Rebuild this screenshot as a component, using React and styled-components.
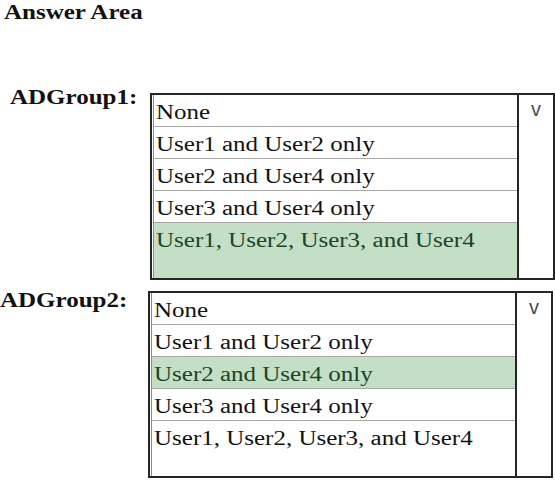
import React from 'react';
import styled, { createGlobalStyle } from 'styled-components';

const GlobalStyle = createGlobalStyle`
  html, body {
    margin: 0;
    padding: 0;
    background: #fff;
  }
  body {
    font-family: "Liberation Serif", "Times New Roman", serif;
    color: #111;
  }
`;

const Page = styled.div`
  width: 555px;
  height: 480px;
  overflow: hidden;
  display: flex;
  flex-direction: column;
`;

// the source picture is stretched sideways, so text is widened to match
const Stretch = styled.span`
  display: inline-block;
  white-space: nowrap;
  font-family: "Liberation Serif", "Times New Roman", serif;
  transform: scaleX(1.25);
  transform-origin: left center;
`;

const Title = styled.div`
  padding-left: 4px;
  height: 24px;
  line-height: 24px;
  font-size: 20px;
  font-weight: bold;
  margin-bottom: 69px;
`;

const Group = styled.div`
  display: flex;
  align-items: flex-start;
  margin-bottom: ${({ $gap }) => $gap}px;
`;

const Label = styled.div`
  box-sizing: border-box;
  width: ${({ $width }) => $width}px;
  padding-left: ${({ $indent }) => $indent}px;
  margin-top: ${({ $offset }) => $offset}px;
  font-size: 20px;
  font-weight: bold;
  line-height: 24px;
  flex-shrink: 0;
`;

const Frame = styled.div`
  box-sizing: border-box;
  width: 405px;
  height: 187px;
  border: 2px solid #262626;
  display: flex;
`;

const List = styled.div`
  flex: 1;
  display: flex;
  flex-direction: column;
  margin-left: 1px;
  border-left: 1px solid #8c8c8c;
`;

const Option = styled.div`
  box-sizing: border-box;
  height: ${({ $last }) => ($last ? 'auto' : '32px')};
  flex: ${({ $last }) => ($last ? 1 : '0 0 auto')};
  border-bottom: ${({ $last }) => ($last ? 'none' : '1px solid #a8a8a8')};
  padding: 3px 0 0 2px;
  font-size: 20px;
  line-height: 28px;
  background: ${({ $picked }) => ($picked ? '#c3dfc6' : '#fff')};
  color: ${({ $picked }) => ($picked ? '#1c4426' : '#121212')};
`;

const Arrow = styled.div`
  width: 34px;
  border-left: 2px solid #262626;
  text-align: center;
  padding-top: 3px;
  font-family: "Liberation Sans", Arial, sans-serif;
  font-size: 20px;
  line-height: 22px;
  color: #4a4a4a;
`;

const choices = [
  'None',
  'User1 and User2 only',
  'User2 and User4 only',
  'User3 and User4 only',
  'User1, User2, User3, and User4',
];

function Dropdown({ picked }) {
  return (
    <Frame>
      <List>
        {choices.map((c, i) => (
          <Option key={c} $picked={i === picked} $last={i === choices.length - 1}>
            <Stretch>{c}</Stretch>
          </Option>
        ))}
      </List>
      <Arrow>v</Arrow>
    </Frame>
  );
}

export default function App() {
  return (
    <Page>
      <GlobalStyle />
      <Title>
        <Stretch>Answer Area</Stretch>
      </Title>
      <Group $gap={11}>
        <Label $width={150} $indent={10} $offset={-8}>
          <Stretch>ADGroup1:</Stretch>
        </Label>
        <Dropdown picked={4} />
      </Group>
      <Group $gap={0}>
        <Label $width={148} $indent={0} $offset={-3}>
          <Stretch>ADGroup2:</Stretch>
        </Label>
        <Dropdown picked={2} />
      </Group>
    </Page>
  );
}
